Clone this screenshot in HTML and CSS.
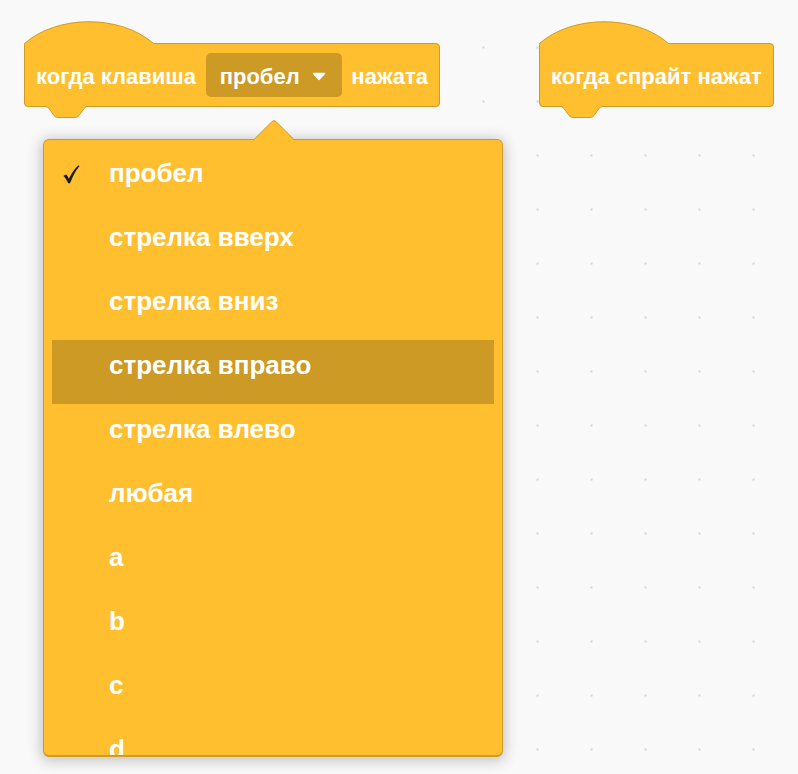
FILE: index.html
```html
<!DOCTYPE html>
<html lang="ru">
<head>
<meta charset="utf-8">
<title>Scratch</title>
<link rel="stylesheet" href="styles.css">
</head>
<body>
<div class="workspace">
  <div class="block block-key">
    <svg class="hat" width="132" height="26" viewBox="0 0 132 26">
      <path class="hat-fill" d="M0.5,23.5 C33.5,-5.5 96.5,-5.5 129.5,23.5 L129.5,25 L0.5,25 Z"/>
      <path class="hat-line" d="M0.5,23.5 C33.5,-5.5 96.5,-5.5 129.5,23.5"/>
    </svg>
    <span class="label">когда клавиша</span>
    <span class="field">пробел
      <svg class="caret" width="14" height="9" viewBox="0 0 14 9"><path d="M1.5,1.5 L12.5,1.5 L7,7.5 Z"/></svg>
    </span>
    <span class="label">нажата</span>
    <svg class="notch" width="44" height="13" viewBox="0 0 44 13">
      <path class="notch-fill" d="M0,0 L0,0.5 c2,0 3,1 4,2 l5,7 c1,1 2,2 4,2 h17 c2,0 3,-1 4,-2 l5,-7 c1,-1 2,-2 4,-2 L43,0 Z"/>
      <path class="notch-line" d="M0,0.5 c2,0 3,1 4,2 l5,7 c1,1 2,2 4,2 h17 c2,0 3,-1 4,-2 l5,-7 c1,-1 2,-2 4,-2"/>
    </svg>
  </div>

  <div class="block block-sprite">
    <svg class="hat" width="132" height="26" viewBox="0 0 132 26">
      <path class="hat-fill" d="M0.5,23.5 C33.5,-5.5 96.5,-5.5 129.5,23.5 L129.5,25 L0.5,25 Z"/>
      <path class="hat-line" d="M0.5,23.5 C33.5,-5.5 96.5,-5.5 129.5,23.5"/>
    </svg>
    <span class="label">когда спрайт нажат</span>
    <svg class="notch" width="44" height="13" viewBox="0 0 44 13">
      <path class="notch-fill" d="M0,0 L0,0.5 c2,0 3,1 4,2 l5,7 c1,1 2,2 4,2 h17 c2,0 3,-1 4,-2 l5,-7 c1,-1 2,-2 4,-2 L43,0 Z"/>
      <path class="notch-line" d="M0,0.5 c2,0 3,1 4,2 l5,7 c1,1 2,2 4,2 h17 c2,0 3,-1 4,-2 l5,-7 c1,-1 2,-2 4,-2"/>
    </svg>
  </div>

  <div class="dropdown">
    <div class="pointer"></div>
    <ul class="menu">
      <li class="item">
        <svg class="check" width="17" height="19" viewBox="0 0 17 19">
          <path d="M0.5,11 C1.5,9.8 2.8,9.4 3.6,9.8 C4.4,10.8 5.2,12.4 5.9,13.8 C8.4,8.6 11.4,4 15.2,0.6 C15.8,0.2 16.6,0.8 16.2,1.4 C12.4,6 9.6,11.4 7.4,17.6 C7,18.6 5.6,18.8 5,17.8 C3.8,15.4 2.4,13 0.5,11 Z"/>
        </svg>пробел</li>
      <li class="item">стрелка вверх</li>
      <li class="item">стрелка вниз</li>
      <li class="item active">стрелка вправо</li>
      <li class="item">стрелка влево</li>
      <li class="item">любая</li>
      <li class="item">a</li>
      <li class="item">b</li>
      <li class="item">c</li>
      <li class="item">d</li>
    </ul>
  </div>
</div>
</body>
</html>
```

FILE: styles.css
```css
html, body {
  margin: 0;
  padding: 0;
}

body {
  width: 798px;
  height: 774px;
  overflow: hidden;
  font-family: "Liberation Sans", Arial, sans-serif;
}

.workspace {
  position: relative;
  width: 798px;
  height: 774px;
  background-color: #f9f9f9;
  background-image: radial-gradient(circle, #d6d6d6 0, #d6d6d6 1px, rgba(214,214,214,0) 1.6px);
  background-size: 54px 54px;
  background-position: 24.5px 20.5px;
}

/* ---------- blocks ---------- */
.block {
  position: absolute;
  top: 43px;
  box-sizing: border-box;
  height: 64px;
  display: flex;
  align-items: center;
  padding: 3px 11px 0;
  background: #ffbf2e;
  border: 1px solid #cf9b25;
  border-radius: 0 4px 4px 4px;
  color: #fff;
  font-weight: bold;
  font-size: 22px;
  white-space: nowrap;
}

.block-key {
  left: 24px;
  width: 416px;
  justify-content: space-between;
}

.block-sprite {
  left: 539px;
  width: 235px;
}

.hat {
  position: absolute;
  left: -1px;
  top: -24px;
  overflow: visible;
}

.hat-fill { fill: #ffbf2e; }
.hat-line { fill: none; stroke: #cf9b25; stroke-width: 1; }

.notch {
  position: absolute;
  left: 20px;
  top: 100%;
  overflow: visible;
}

.notch-fill { fill: #ffbf2e; }
.notch-line { fill: none; stroke: #cf9b25; stroke-width: 1; }

.field {
  display: flex;
  align-items: center;
  gap: 12px;
  height: 44px;
  box-sizing: border-box;
  margin-top: -3px;
  padding: 3px 16px 0 14px;
  background: #cc9a25;
  border-radius: 5px;
}

.caret path {
  fill: #fff;
  stroke: #fff;
  stroke-width: 1.5;
  stroke-linejoin: round;
}

/* ---------- dropdown ---------- */
.dropdown {
  position: absolute;
  left: 43px;
  top: 139px;
  width: 460px;
  height: 618px;
  box-sizing: border-box;
  background: #ffbf2e;
  border: 1px solid #cf9b25;
  border-bottom-width: 2px;
  border-radius: 6px;
  box-shadow: 0 2px 14px 2px rgba(0, 0, 0, 0.22);
}

.pointer {
  position: absolute;
  left: 215px;
  top: -15px;
  width: 30px;
  height: 30px;
  box-sizing: border-box;
  background: #ffbf2e;
  border-top: 1px solid #cf9b25;
  border-left: 1px solid #cf9b25;
  border-top-left-radius: 4px;
  transform: rotate(45deg);
}

.menu {
  position: relative;
  list-style: none;
  margin: 0;
  padding: 8px 8px 0;
  height: 100%;
  box-sizing: border-box;
  overflow: hidden;
  border-radius: 6px;
}

.item {
  position: relative;
  height: 64px;
  box-sizing: border-box;
  padding: 9px 0 0 57px;
  line-height: 32px;
  font-size: 26px;
  font-weight: bold;
  color: #fff;
}

.item.active {
  background: #cc9a25;
}

.check {
  position: absolute;
  left: 11px;
  top: 17px;
  fill: #1c1c1c;
}
```
